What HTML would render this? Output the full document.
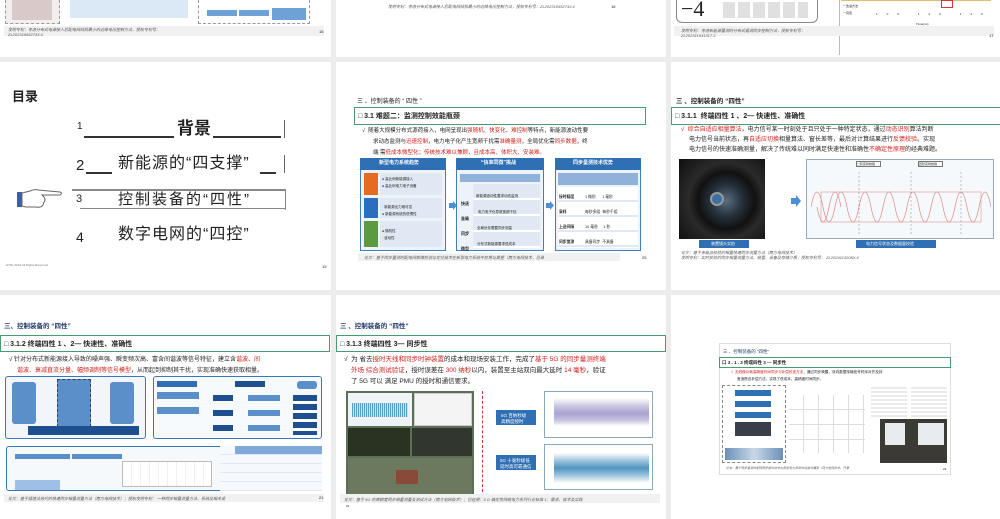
<!DOCTYPE html>
<html><head><meta charset="utf-8"><style>
*{margin:0;padding:0;box-sizing:border-box}
body{width:1000px;height:519px;background:#ececec;position:relative;overflow:hidden;font-family:"Liberation Sans","Noto Sans CJK SC",sans-serif;color:#222}
.s{position:absolute;background:#fff;overflow:hidden}
.a{position:absolute}
.t{position:absolute;white-space:nowrap;line-height:1}
.gb{position:absolute;border:1.5px solid #4a9a72;background:#fff}
.blue{background:#2f6fb3}
.lb{background:#dfe8f3}
.red{color:#d0201c}
.ft{position:absolute;font-size:4px;color:#555;font-style:italic}
</style></head><body>

<!-- Row 1 -->
<div class="s" style="left:0;top:0;width:331px;height:57px">
 <div class="a" style="left:5px;top:0;width:55px;height:24px;border:1px dashed #999;border-top:none;background:#f3eeee"></div>
 <div class="a" style="left:12px;top:0;width:40px;height:20px;background:#d9c9c9"></div>
 <div class="a" style="left:70px;top:0;width:118px;height:18px;background:#dbe9f6"></div>
 <div class="a" style="left:198px;top:0;width:112px;height:24px;border:1px dashed #999;border-top:none"></div>
 <div class="a" style="left:207px;top:10px;width:30px;height:6px;background:#6ea1d5"></div>
 <div class="a" style="left:239px;top:10px;width:30px;height:6px;background:#6ea1d5"></div>
 <div class="a" style="left:272px;top:8px;width:34px;height:12px;background:#6ea1d5"></div>
 <div class="a" style="left:4px;top:26px;width:320px;height:10px;background:#f1f1f1"></div>
 <div class="ft" style="left:8px;top:27px">发明专利：考虑分布式电源接入后配电网线损最小的边缘电压控制方法，授权专利号：</div>
 <div class="ft" style="left:8px;top:32px">ZL202310652743.4</div>
 <div class="t" style="left:319px;top:30px;font-size:4px">15</div>
</div>
<div class="s" style="left:336px;top:0;width:330px;height:57px">
 <div class="ft" style="left:52px;top:4px">发明专利：考虑分布式电源接入后配电网线损最小的边缘电压控制方法，授权专利号：ZL202310652743.4</div>
 <div class="t" style="left:275px;top:5px;font-size:4px">16</div>
</div>
<div class="s" style="left:671px;top:0;width:329px;height:57px">
 <div class="a" style="left:5px;top:0;width:142px;height:23px;border:1px solid #888;border-top:none;border-radius:0 0 6px 6px"></div>
 <div class="t" style="left:10px;top:-2px;font-size:22px;font-family:'Liberation Serif',serif">−4</div>
 <div class="a" style="left:52px;top:2px;width:85px;height:16px;background:repeating-linear-gradient(90deg,#ccc 0 12px,#fff 12px 15px);opacity:.6"></div>
 <div class="a" style="left:168px;top:0;width:1px;height:55px;background:#bbb"></div>
 <div class="a" style="left:170px;top:0;width:150px;height:1px;background:#e0c070"></div>
 <div class="a" style="left:270px;top:0;width:12px;height:8px;border:1px solid #d33"></div>
 <div class="t" style="left:172px;top:5px;font-size:3px">一改进方法</div>
 <div class="t" style="left:172px;top:12px;font-size:3px">一真值</div>
 <div class="t" style="left:205px;top:13px;font-size:3px;letter-spacing:9px">100 120 140 160 180 200 220</div>
 <div class="t" style="left:245px;top:23px;font-size:3px">Time(ms)</div>
 <div class="a" style="left:3px;top:26px;width:320px;height:10px;background:#f1f1f1"></div>
 <div class="ft" style="left:10px;top:28px">发明专利：考虑新能源量测的分布式遥调同步控制方法，授权专利号：</div>
 <div class="ft" style="left:10px;top:33px">ZL202311641317.3</div>
 <div class="t" style="left:318px;top:34px;font-size:4px">17</div>
</div>

<!-- Row 2 col1 -->
<div class="s" style="left:0;top:62px;width:331px;height:228px">
 <div class="t" style="left:12px;top:28px;font-size:13px;font-weight:bold">目录</div>
 <div class="t" style="left:77px;top:60px;font-size:10px">1</div>
 <div class="a" style="left:84px;top:74px;width:90px;height:1.5px;background:#333"></div>
 <div class="t" style="left:177px;top:58px;font-size:17px;font-weight:bold">背景</div>
 <div class="a" style="left:213px;top:74px;width:68px;height:1.5px;background:#333"></div>
 <div class="a" style="left:284px;top:58px;width:1px;height:18px;background:#666"></div>
 <div class="t" style="left:76px;top:96px;font-size:15px">2</div>
 <div class="a" style="left:86px;top:110px;width:26px;height:1.5px;background:#333"></div>
 <div class="t" style="left:118px;top:94px;font-size:16px;letter-spacing:1px">新能源的“四支撑”</div>
 <div class="a" style="left:260px;top:110px;width:16px;height:1.5px;background:#333"></div>
 <div class="a" style="left:284px;top:93px;width:1px;height:18px;background:#666"></div>
 <div class="a" style="left:72px;top:127px;width:214px;height:1.5px;background:#888"></div>
 <div class="a" style="left:285px;top:127px;width:1px;height:21px;background:#888"></div>
 <div class="a" style="left:80px;top:146px;width:206px;height:1px;background:#888"></div>
 <div class="t" style="left:76px;top:132px;font-size:11px">3</div>
 <div class="t" style="left:118px;top:130px;font-size:15px;letter-spacing:2px">控制装备的“四性”</div>
 <!-- hand -->
 <svg class="a" style="left:16px;top:125px" width="48" height="24" viewBox="0 0 48 24">
  <rect x="1" y="5" width="5" height="15" fill="#3b5ea8"/>
  <path d="M6 6 L14 4 Q18 2 22 3 L44 5 Q47 6 44 8 L26 8 L28 10 Q30 13 28 15 L27 18 Q25 21 20 20 L10 20 L6 19 Z" fill="#fff" stroke="#666" stroke-width="1"/>
 </svg>
 <div class="t" style="left:76px;top:168px;font-size:14px">4</div>
 <div class="t" style="left:118px;top:165px;font-size:16px;letter-spacing:1px">数字电网的“四控”</div>
 <div class="t" style="left:6px;top:202px;font-size:3px;color:#777">HTSL 2023 All Rights Reserved</div>
 <div class="t" style="left:322px;top:203px;font-size:4px">19</div>
</div>

<!-- Row 2 col2 -->
<div class="s" style="left:336px;top:62px;width:330px;height:228px">
 <div class="t" style="left:21px;top:37px;font-size:6px">三 、控制装备的 “ 四性 ”</div>
 <div class="gb" style="left:18px;top:45px;width:292px;height:18px"></div>
 <div class="t" style="left:22px;top:51px;font-size:7px;font-weight:bold">□ 3.1 难题二：监测控制效能瓶颈</div>
 <div class="t" style="left:26px;top:67px;font-size:5.5px">√ &nbsp;随着大规模分布式源荷接入，电网呈现出<span class="red">强随机、快变化、难控制</span>等特点，新能源波动性要</div>
 <div class="t" style="left:37px;top:78px;font-size:5.5px">求动态监测与<span class="red">迅速控制</span>，电力电子化产生宽频干扰需<span class="red">准确量测</span>，全局优化需<span class="red">同步数据</span>，终</div>
 <div class="t" style="left:37px;top:89px;font-size:5.5px">端 需<span class="red">低成本微型化；传统技术难以兼顾，且成本高、体积大、安装难。</span></div>
 <!-- panel1 -->
 <div class="a" style="left:24px;top:96px;width:86px;height:93px;border:1px solid #3f7fc0;background:#eef3f9"></div>
 <div class="a blue" style="left:24px;top:96px;width:86px;height:12px"></div>
 <div class="t" style="left:43px;top:99px;font-size:5px;color:#fff;font-weight:bold">新型电力系统趋势</div>
 <div class="a" style="left:28px;top:111px;width:14px;height:22px;background:#e46b1f"></div>
 <div class="a" style="left:28px;top:136px;width:14px;height:20px;background:#2a6fbf"></div>
 <div class="a" style="left:28px;top:159px;width:14px;height:26px;background:#5c9a3f"></div>
 <div class="a lb" style="left:44px;top:111px;width:62px;height:22px"></div>
 <div class="a lb" style="left:44px;top:136px;width:62px;height:20px"></div>
 <div class="a lb" style="left:44px;top:159px;width:62px;height:26px"></div>
 <div class="t" style="left:46px;top:116px;font-size:3.5px">● 高比例新能源接入<br><br>● 高比例电力电子设备</div>
 <div class="t" style="left:46px;top:144px;font-size:3.5px">· 新能源出力难可控<br><br>● 新能源系统的低惯性</div>
 <div class="t" style="left:46px;top:168px;font-size:3.5px">● 随机性<br><br>· 波动性</div>
 <svg class="a" style="left:113px;top:139px" width="8" height="9"><path d="M0 2h4V0l4 4.5L4 9V7H0z" fill="#4a90d8"/></svg>
 <!-- panel2 -->
 <div class="a" style="left:120px;top:96px;width:88px;height:93px;border:1px solid #3f7fc0;background:#eef3f9"></div>
 <div class="a blue" style="left:120px;top:96px;width:88px;height:12px"></div>
 <div class="t" style="left:145px;top:99px;font-size:5px;color:#fff;font-weight:bold">“快准同微”挑战</div>
 <div class="a" style="left:124px;top:112px;width:80px;height:8px;background:#8fb1da"></div>
 <div class="a" style="left:137px;top:122px;width:67px;height:64px;background:repeating-linear-gradient(#dfe8f3 0 14px,#fff 14px 16px)"></div>
 <div class="t" style="left:125px;top:134px;font-size:4px;line-height:15px;font-weight:bold">快速<br>准确<br>同步<br>微型</div>
 <div class="t" style="left:140px;top:126px;font-size:3.5px;line-height:16px">新能源波动性要求动态监测<br>&nbsp;&nbsp;电力电子化导致宽频干扰<br>&nbsp;全局优化需要同步测量<br>&nbsp;分布式新能源要求低成本</div>
 <svg class="a" style="left:210px;top:139px" width="8" height="9"><path d="M0 2h4V0l4 4.5L4 9V7H0z" fill="#4a90d8"/></svg>
 <!-- panel3 -->
 <div class="a" style="left:219px;top:96px;width:86px;height:93px;border:1px solid #3f7fc0;background:#eef3f9"></div>
 <div class="a blue" style="left:219px;top:96px;width:86px;height:12px"></div>
 <div class="t" style="left:237px;top:99px;font-size:5px;color:#fff;font-weight:bold">同步量测技术优势</div>
 <div class="a" style="left:222px;top:111px;width:80px;height:12px;background:#8fb1da"></div>
 <div class="a" style="left:222px;top:125px;width:80px;height:61px;background:repeating-linear-gradient(#fff 0 13px,#dfe8f3 13px 15px)"></div>
 <div class="t" style="left:223px;top:128px;font-size:3.8px;line-height:15px;font-weight:bold">授时精度<br>采样<br>上送间隔<br>同步量测</div>
 <div class="t" style="left:249px;top:128px;font-size:3.8px;line-height:15px">1 微秒 &nbsp;&nbsp;&nbsp;&nbsp;&nbsp;1 毫秒<br>每秒多组 &nbsp;每秒千组<br>10 毫秒 &nbsp;&nbsp;&nbsp;&nbsp;1 秒<br>具备同步 &nbsp;不具备</div>
 <div class="a" style="left:22px;top:191px;width:262px;height:8px;background:#f1f1f1"></div>
 <div class="ft" style="left:28px;top:193px">论文：基于同步量测的配电网故障检测与定位技术在新型电力系统中应用与展望（南方电网技术，已录</div>
 <div class="t" style="left:306px;top:194px;font-size:4px">25</div>
</div>

<!-- Row 2 col3 -->
<div class="s" style="left:671px;top:62px;width:329px;height:228px">
 <div class="t" style="left:5px;top:37px;font-size:6.5px;font-weight:bold">三 、控制装备的 “四性”</div>
 <div class="gb" style="left:0;top:45px;width:335px;height:18px"></div>
 <div class="t" style="left:4px;top:51px;font-size:7px;font-weight:bold">□ 3.1.1 &nbsp;终端四性 1 、2— 快速性、准确性</div>
 <div class="t" style="left:10px;top:65px;font-size:6px"><span class="red">√ &nbsp;综合自适应相量算法</span>，电力信号某一时刻处于且只处于一种特定状态，通过<span class="red">动态识别</span>算法判断</div>
 <div class="t" style="left:18px;top:75px;font-size:6px">电力信号当前状态，再<span class="red">自适应切换</span>相量算法、窗长差等，最后对计算结果进行<span class="red">反馈校验</span>。实现</div>
 <div class="t" style="left:18px;top:85px;font-size:6px">电力信号的快速准确测量，解决了传统难以同时满足快速性和准确性<span class="red">不确定性原理</span>的经典难题。</div>
 <div class="a" style="left:8px;top:97px;width:86px;height:80px;background:radial-gradient(circle at 55% 52%,#5a6e80 0,#26313c 25%,#111 45%,#2a2a2a 60%,#0e0e0e 100%)"></div>
 <div class="a" style="left:39px;top:130px;width:14px;height:14px;border-radius:50%;background:#3a6fa0;border:2px solid #999"></div>
 <div class="a blue" style="left:28px;top:178px;width:50px;height:8px"></div>
 <div class="t" style="left:40px;top:180px;font-size:4px;color:#fff">装置镜头实拍</div>
 <svg class="a" style="left:120px;top:133px" width="10" height="12"><path d="M0 3h5V0l5 6-5 6V9H0z" fill="#4a90d8"/></svg>
 <div class="a" style="left:135px;top:97px;width:188px;height:80px;border:1px solid #9ab;background:#f6f9fc"></div>
 <svg class="a" style="left:140px;top:110px" width="180" height="62" viewBox="0 0 180 62">
  <rect x="0" y="0" width="180" height="62" fill="none"/>
  <path d="M0 35 Q6 5 12 35 T24 35 T36 35 T48 35 T60 35 T72 35 T84 35 T96 35 T108 35 T120 35 T132 35 T144 35 T156 35 T168 35 T180 35" stroke="#d88" fill="none" stroke-width="0.7"/>
  <path d="M0 35 Q6 65 12 35 T24 35" stroke="#d88" fill="none" stroke-width="0.7" transform="translate(6 0)"/>
  <rect x="10" y="20" width="160" height="30" fill="none" stroke="#e09090" stroke-width="0.6"/>
  <line x1="48" y1="0" x2="48" y2="62" stroke="#666" stroke-width="0.4" stroke-dasharray="2 2"/>
  <line x1="100" y1="0" x2="100" y2="62" stroke="#666" stroke-width="0.4" stroke-dasharray="2 2"/>
  <line x1="150" y1="0" x2="150" y2="62" stroke="#666" stroke-width="0.4" stroke-dasharray="2 2"/>
 </svg>
 <div class="a" style="left:185px;top:99px;width:25px;height:6px;border:1px solid #777;font-size:3px">二阶实时校验</div>
 <div class="a" style="left:247px;top:99px;width:25px;height:6px;border:1px solid #777;font-size:3px">四阶实时校验</div>
 <div class="a blue" style="left:185px;top:178px;width:80px;height:8px"></div>
 <div class="t" style="left:195px;top:180px;font-size:4px;color:#fff">电力信号状态及数据量校验</div>
 <div class="ft" style="left:10px;top:188px">论文：基于多级自校验的相量快速同步测量方法（南方电网技术）</div>
 <div class="ft" style="left:10px;top:193px">发明专利：实时校验的同步相量测量方法、装置、设备及存储介质，授权专利号： ZL2024113208X.4</div>
</div>

<!-- Row 3 col1 -->
<div class="s" style="left:0;top:295px;width:331px;height:224px">
 <div class="t" style="left:4px;top:29px;font-size:6.5px;font-weight:bold;color:#233a66">三、控制装备的 “四性”</div>
 <div class="gb" style="left:0;top:40px;width:330px;height:17px"></div>
 <div class="t" style="left:4px;top:46px;font-size:7px;font-weight:bold">□ 3.1.2 终端四性 1 、2— 快速性、准确性</div>
 <div class="t" style="left:9px;top:62px;font-size:6px">√ 针对分布式新能源接入导致的噪声强、瞬变频次高、富含间谐波等信号特征，建立含<span class="red">谐波、间</span></div>
 <div class="t" style="left:17px;top:73px;font-size:6px"><span class="red">谐波、衰减直流分量、幅频调制等信号模型</span>，从而起到抑制其干扰，实现准确快速获取相量。</div>
 <div class="a" style="left:5px;top:81px;width:141px;height:63px;border:1.5px solid #3a77b8;border-radius:3px;background:#f2f6fb"></div>
 <div class="a" style="left:12px;top:87px;width:24px;height:42px;background:#5b8fc9;border-radius:3px"></div>
 <div class="a" style="left:57px;top:84px;width:34px;height:48px;border:1px dashed #345;background:#5b8fc9"></div>
 <div class="a" style="left:110px;top:87px;width:24px;height:42px;background:#5b8fc9;border-radius:3px"></div>
 <div class="a" style="left:28px;top:131px;width:111px;height:9px;background:#1e4f8e"></div>
 <div class="a" style="left:153px;top:81px;width:169px;height:63px;border:1.5px solid #3a77b8;border-radius:3px;background:#f7fafd"></div>
 <div class="a blue" style="left:157px;top:86px;width:40px;height:6px"></div>
 <div class="a" style="left:297px;top:86px;width:20px;height:8px;background:#5b8fc9;border-radius:3px"></div>
 <div class="a" style="left:157px;top:97px;width:42px;height:7px;background:#5b8fc9"></div>
 <div class="a" style="left:157px;top:112px;width:42px;height:7px;background:#5b8fc9"></div>
 <div class="a" style="left:235px;top:86px;width:30px;height:6px;background:#1e4f8e"></div>
 <div class="a" style="left:213px;top:100px;width:20px;height:6px;background:#1e4f8e"></div>
 <div class="a" style="left:213px;top:115px;width:20px;height:6px;background:#1e4f8e"></div>
 <div class="a" style="left:213px;top:130px;width:20px;height:6px;background:#1e4f8e"></div>
 <div class="a" style="left:248px;top:100px;width:32px;height:6px;background:#5b8fc9"></div>
 <div class="a" style="left:248px;top:115px;width:32px;height:6px;background:#5b8fc9"></div>
 <div class="a" style="left:248px;top:130px;width:32px;height:6px;background:#5b8fc9"></div>
 <div class="a" style="left:293px;top:100px;width:24px;height:40px;background:repeating-linear-gradient(#1e4f8e 0 6px,#fff 6px 9px)"></div>
 <div class="a" style="left:6px;top:151px;width:316px;height:45px;border:1.5px solid #3a77b8;border-radius:3px;background:#f6f9fc"></div>
 <div class="a" style="left:15px;top:159px;width:55px;height:5px;background:#5b8fc9"></div>
 <div class="a" style="left:72px;top:159px;width:50px;height:5px;background:#5b8fc9"></div>
 <div class="a" style="left:15px;top:185px;width:45px;height:10px;background:#9ec0e6"></div>
 <div class="a" style="left:122px;top:166px;width:90px;height:26px;border:1px solid #bbb;background:repeating-linear-gradient(90deg,#fff 0 8px,#f0f0f0 8px 9px)"></div>
 <div class="a" style="left:220px;top:151px;width:102px;height:45px;background:repeating-linear-gradient(#f5f8fc 0 8px,#dfe8f3 8px 9px)"></div>
 <div class="a" style="left:235px;top:151px;width:87px;height:8px;background:#7fa9d9"></div>
 <div class="a" style="left:4px;top:199px;width:320px;height:8px;background:#f1f1f1"></div>
 <div class="ft" style="left:8px;top:201px">论文：基于插值法迭代的快速同步相量测量方法（南方电网技术）；授权发明专利： 一种同步相量测量方法、系统及相关设</div>
 <div class="t" style="left:319px;top:201px;font-size:4px">21</div>
</div>

<!-- Row 3 col2 -->
<div class="s" style="left:336px;top:295px;width:330px;height:224px">
 <div class="t" style="left:4px;top:29px;font-size:6.5px;font-weight:bold;color:#233a66">三 、控制装备的 “四性”</div>
 <div class="gb" style="left:0;top:40px;width:330px;height:17px"></div>
 <div class="t" style="left:4px;top:46px;font-size:7px;font-weight:bold">□ 3.1.3 终端四性 3— 同步性</div>
 <div class="t" style="left:8px;top:62px;font-size:6.5px">√ &nbsp;为 省去<span class="red">授时天线和同步时钟装置</span>的成本和现场安装工作，完成了<span class="red">基于 5G 的同步量测终端</span></div>
 <div class="t" style="left:15px;top:73px;font-size:6.5px"><span class="red">外场 综合测试验证</span>，授时误差在 <span class="red">300 纳秒</span>以内，装置至主站双向最大延时 <span class="red">14 毫秒</span>，验证</div>
 <div class="t" style="left:15px;top:84px;font-size:6.5px">了 5G 可以 满足 PMU 的授时和通信要求。</div>
 <div class="a" style="left:10px;top:96px;width:128px;height:105px;background:#5d6e56"></div>
 <div class="a" style="left:12px;top:98px;width:64px;height:33px;background:#eef3f6"></div>
 <div class="a" style="left:16px;top:108px;width:56px;height:14px;background:repeating-linear-gradient(90deg,#5a9fc8 0 1px,#c8e0ef 1px 2px)"></div>
 <div class="a" style="left:78px;top:98px;width:58px;height:33px;background:#f4f4f4;border:1px solid #ccc"></div>
 <div class="a" style="left:12px;top:133px;width:62px;height:28px;background:#2a3322"></div>
 <div class="a" style="left:76px;top:133px;width:60px;height:28px;background:#31372e"></div>
 <div class="a" style="left:12px;top:163px;width:124px;height:36px;background:#6b7a5e"></div>
 <div class="a" style="left:60px;top:175px;width:22px;height:14px;background:#8a4a3a"></div>
 <div class="a" style="left:146px;top:96px;width:0;height:106px;border-left:1px dashed #d33"></div>
 <div class="a" style="left:160px;top:115px;width:40px;height:15px;background:#2f6fb3"></div>
 <div class="t" style="left:165px;top:118px;font-size:4.5px;color:#fff;line-height:1.3">5G 百纳秒级<br>高精度授时</div>
 <div class="a" style="left:208px;top:96px;width:109px;height:47px;border:1px solid #8ab;background:#fff"></div>
 <div class="a" style="left:218px;top:103px;width:95px;height:28px;background:linear-gradient(#fff 0,#c9c4e0 30%,#a9a3d2 55%,#c9c4e0 80%,#fff 100%)"></div>
 <div class="a" style="left:160px;top:160px;width:40px;height:15px;background:#2f6fb3"></div>
 <div class="t" style="left:164px;top:163px;font-size:4.5px;color:#fff;line-height:1.3">5G 十毫秒级低<br>延时高可靠通信</div>
 <div class="a" style="left:208px;top:149px;width:109px;height:46px;border:1px solid #8ab;background:#fff"></div>
 <div class="a" style="left:218px;top:158px;width:95px;height:30px;background:linear-gradient(#fff 0,#9fc6de 25%,#4f95bf 50%,#9fc6de 75%,#fff 100%)"></div>
 <div class="a" style="left:4px;top:199px;width:320px;height:9px;background:#f1f1f1"></div>
 <div class="ft" style="left:8px;top:202px">论文：基于 5G 的高精度同步相量测量及测试方法（南方电网技术）；已征用：5 G 确定性网络电力系列行业标准 1：需求、技术及实践</div>
 <div class="t" style="left:10px;top:210px;font-size:3px">22</div>
</div>

<!-- Row 3 col3 -->
<div class="s" style="left:671px;top:295px;width:329px;height:224px">
 <div class="a" style="left:48px;top:48px;width:232px;height:132px;border:1px solid #ddd;background:#fff"></div>
 <div class="t" style="left:52px;top:55px;font-size:4.5px;color:#233a66">三 、控制装备的 “四性”</div>
 <div class="a" style="left:48px;top:62px;width:232px;height:11px;border:1px solid #4a9a72;background:#fff"></div>
 <div class="t" style="left:51px;top:66px;font-size:4.5px;font-weight:bold">口 3 . 1 . 3 终端四性 3 — 同步性</div>
 <div class="t" style="left:60px;top:76px;font-size:3.6px"><span class="red">√ &nbsp;无线微功耗高精度时间同步与补偿校准方法</span>，通过同步唤醒，双向数据传输信号时序对齐及钟</div>
 <div class="t" style="left:66px;top:83px;font-size:3.6px">差追踪自补偿方法，实现了低成本、高精度时间同步。</div>
 <div class="a" style="left:51px;top:90px;width:64px;height:78px;border:1px dashed #888"></div>
 <div class="a blue" style="left:64px;top:95px;width:36px;height:6px"></div>
 <div class="a blue" style="left:64px;top:106px;width:36px;height:6px"></div>
 <div class="a blue" style="left:64px;top:117px;width:36px;height:6px"></div>
 <div class="a" style="left:64px;top:127px;width:36px;height:14px;background:#3a3e4a"></div>
 <div class="a" style="left:54px;top:153px;width:58px;height:12px;background:linear-gradient(90deg,#6a90b8,#c9d8e8,#6a90b8)"></div>
 <div class="a" style="left:118px;top:100px;width:76px;height:58px;background:repeating-linear-gradient(90deg,transparent 0 14px,#ddd 14px 15px),repeating-linear-gradient(transparent 0 14px,#ddd 14px 15px)"></div>
 <div class="a" style="left:200px;top:92px;width:36px;height:30px;background:repeating-linear-gradient(#eaeaea 0 2px,#fff 2px 4px)"></div>
 <div class="a" style="left:240px;top:92px;width:36px;height:30px;background:repeating-linear-gradient(#eaeaea 0 2px,#fff 2px 4px)"></div>
 <div class="a" style="left:209px;top:124px;width:67px;height:44px;background:#3b3a34"></div>
 <div class="a" style="left:214px;top:128px;width:20px;height:22px;background:#e8ecef"></div>
 <div class="a" style="left:247px;top:128px;width:26px;height:22px;background:#e8ecef"></div>
 <div class="ft" style="left:55px;top:171px;font-size:3px">论文：基于同步量测的配网同步授时技术在新型电力系统中应用与展望（南方电网技术，已录</div>
 <div class="t" style="left:272px;top:173px;font-size:3px">23</div>
</div>
</body></html>
